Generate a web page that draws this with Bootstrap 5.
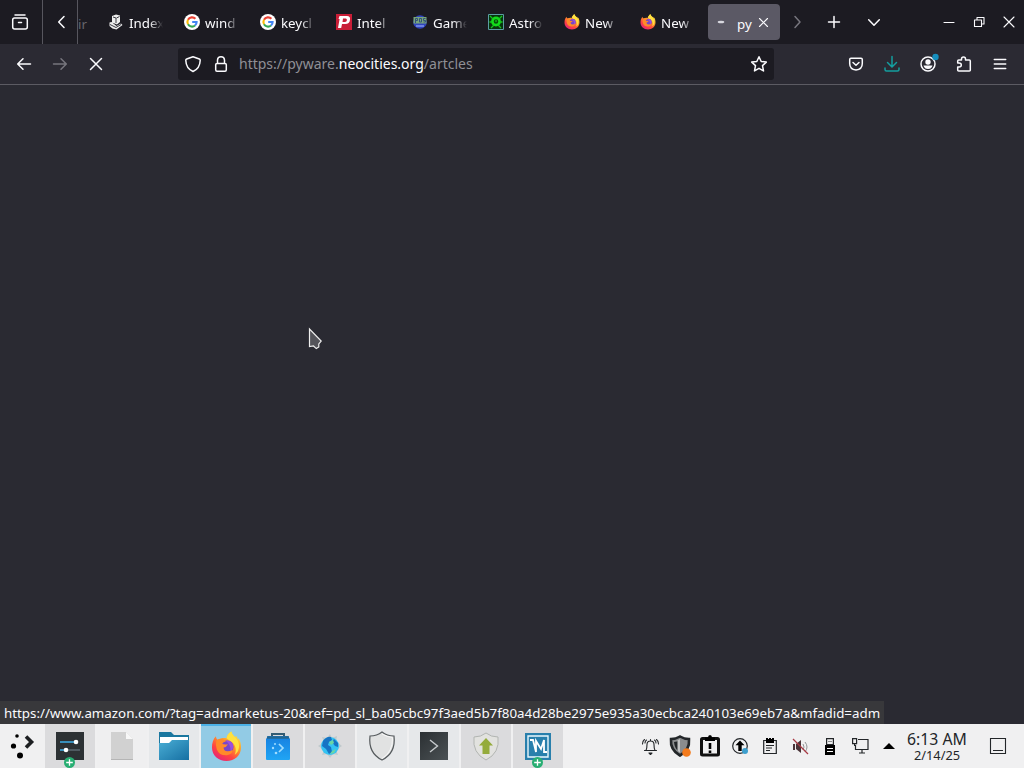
<!DOCTYPE html>
<html lang="en">
<head>
  <meta charset="UTF-8">
  <title>Desktop</title>
  <meta name="viewport" content="width=device-width, initial-scale=1">
  <link href="https://cdn.jsdelivr.net/npm/bootstrap@5.3.3/dist/css/bootstrap.min.css" rel="stylesheet">
  <style>
    body { font-family: "Noto Sans", sans-serif; font-size: 13.33px; line-height: 18px; background: #2a2a2e; color: #fbfbfe; cursor: default; }
    svg { display: block; flex: none; overflow: visible; }
    .ln { fill: none; stroke: currentColor; stroke-width: 1.5; stroke-linecap: round; stroke-linejoin: round; }
    .thin { stroke-width: 1.1; }
    .desktop { width: 1024px; height: 768px; }
    .tabstrip { height: 44px; background: #1c1b22; }
    .strip-btn { width: 43px; padding-left: 12px; border-right: 1px solid #57565e; }
    .strip-btn.scroll-left { width: 35px; padding-left: 15px; }
    .cut-tab { width: 23px; color: #66656c; }
    .browser-tab { width: 76px; padding: 0 0 0 7px; gap: 5px; }
    .tab-label { width: 34px; padding-top: 2px; white-space: nowrap; -webkit-mask-image: linear-gradient(to right, #000 60%, transparent 100%); mask-image: linear-gradient(to right, #000 60%, transparent 100%); }
    .current-tab { width: 72px; height: 36px; background: #5b5965; border-radius: 4px; margin-left: -1px; padding-left: 5px; }
    .navtools { height: 40px; background: #2b2a33; }
    .tool { width: 36px; }
    .urlbar { width: 596px; height: 32px; background: #1c1b22; border-radius: 3px; margin-left: 64px; padding: 0 7px; }
    .url { color: #8f8f95; font-size: 14px; line-height: 16px; padding-bottom: 1px; white-space: nowrap; }
    .url b { color: #fbfbfe; font-weight: 400; }
    .page { border-top: 1px solid #5c5b63; background: #2a2a32; min-height: 0; }
    .pointer { left: 308px; top: 243px; }
    .status { height: 23px; width: 884px; background: #38383b; padding: 3px 4px 0; white-space: nowrap; }
    .taskbar { height: 44px; background: #f0f0f1; color: #232629; }
    .launcher { width: 43px; margin-right: 2px; }
    .task { width: 50px; height: 44px; background: #dbdbdd; }
    .task-idle { background: #efeff0; }
    .task-soft { background: #e6e8ea; }
    .task-active { background: #92cbe5; border-top: 2px solid #4bb1e6; padding-bottom: 2px; }
    .plus { bottom: 0; left: 19px; }
    .tray { width: 30px; }
    .clock { width: 70px; }
    .time { font-size: 15.8px; line-height: 18px; white-space: nowrap; }
    .date { font-size: 12.8px; line-height: 14px; }
  </style>
</head>
<body>

<!-- shared icons -->
<svg width="0" height="0" class="position-absolute">
  <defs>
    <linearGradient id="flame" x1=".85" y1="0" x2=".2" y2="1"><stop offset="0" stop-color="#fff044"/><stop offset=".4" stop-color="#ff982b"/><stop offset=".7" stop-color="#ff4540"/><stop offset="1" stop-color="#e3207f"/></linearGradient>
    <linearGradient id="folder" x1="0" y1="0" x2="1" y2="1"><stop offset="0" stop-color="#4aaed5"/><stop offset="1" stop-color="#166fa2"/></linearGradient>
    <linearGradient id="bag" x1="0" y1="0" x2="0" y2="1"><stop offset="0" stop-color="#177fe0"/><stop offset="1" stop-color="#20a5f4"/></linearGradient>
    <linearGradient id="dark" x1="0" y1="0" x2="1" y2="1"><stop offset="0" stop-color="#2b3033"/><stop offset="1" stop-color="#4b5154"/></linearGradient>
    <symbol id="firefox" viewBox="0 0 32 32">
      <path fill="url(#flame)" d="M16 31C7.500 31 1 25 1 17c0-4.500 1.300-8.500 4-11.500.2 1.500.8 2.500 1.600 3.500 3-1.500 6-2 9.400-1.500C16.500 4 18.500 2 21 .5c.4 2.500 2 4 4 6l.8-1.500c1 1.200 1.700 2.500 2 4 .5-.6.600-1 .6-1.800 1.800 2.800 2.600 6.300 2.600 9.800C31 25 24.500 31 16 31z"/>
      <path fill="#ffe13f" d="M21 .5c.4 2.500 2 4 4 6 4 4 5 9 3 14-.8 2-2 3-3.500 4 2-4.500 1-9.500-2-12.500-2-2-4.500-2.500-6.500-4.500C16.500 4 18.500 2 21 .5z"/>
      <circle cx="16.500" cy="16.500" r="6.800" fill="#7846c8"/>
      <path fill="#9a4fe0" d="M15 10q6-1 8 5 0 4-3 6 1-7-5-11z"/>
      <path fill="#ff8a29" d="M5.500 9.500q6-2.500 10 1-3 .5-4 3 3 .8 6 .2-1.500 3-4.500 3.300 0 3.500 4 4 3.500 0 5.500-2-.5 5-6 6-8 .5-10.500-6-1.500-5-.5-9.500z"/>
    </symbol>
    <symbol id="google" viewBox="0 0 16 16">
      <circle cx="8" cy="8" r="8" fill="#fff"/>
      <g fill="none" stroke-width="2.100"><path stroke="#ea4335" d="M4 5.800A4.600 4.600 0 0 1 11.400 4.800"/><path stroke="#fbbc05" d="M4 5.800A4.700 4.700 0 0 0 4 10.300"/><path stroke="#34a853" d="M4 10.300A4.600 4.600 0 0 0 11 11.500"/><path stroke="#4285f4" d="M11 11.500A4.500 4.500 0 0 0 12.600 8H8.200"/></g>
    </symbol>
    <symbol id="plus" viewBox="0 0 10 10"><circle cx="5" cy="5" r="5" fill="#27ae72"/><path d="M5 2v6M2 5h6" stroke="#fff" stroke-width="1.200"/></symbol>
  </defs>
</svg>

<div class="desktop d-flex flex-column overflow-hidden">

  <!-- tabs -->
  <div class="tabstrip d-flex">
    <div class="strip-btn d-flex align-items-center"><svg width="16" height="16" class="ln"><path d="M3 1h10M2.500 4h11Q15.300 4 15.300 6v7q0 2-2 2H2.700q-2 0-2-2V6q0-2 1.800-2zM6.500 8.500h3"/></svg></div>
    <div class="strip-btn scroll-left d-flex align-items-center"><svg width="7" height="12" class="ln"><path d="M6 .5.700 6 6 11.500"/></svg></div>
    <div class="cut-tab d-flex align-items-center pt-1">ir</div>

    <div class="browser-tab d-flex align-items-center">
      <svg width="16" height="16"><path fill="#eee" d="M4 2 8 .500l4 1V8L9 10.500 4 8.500zM1.500 8.500l2-.5 5 4L13 9.500l1.500 1.500-6 4.500-4-1L1.500 12z"/><path fill="none" stroke="#3a3a42" d="m5 3 3 1v5M8.500 4l3-1.500M2 10.500l6 3 5-3"/></svg>
      <span class="tab-label">Index</span>
    </div>
    <div class="browser-tab d-flex align-items-center"><svg width="16" height="16"><use href="#google"/></svg><span class="tab-label">wind</span></div>
    <div class="browser-tab d-flex align-items-center"><svg width="16" height="16"><use href="#google"/></svg><span class="tab-label">keycl</span></div>
    <div class="browser-tab d-flex align-items-center">
      <svg width="16" height="16"><path fill="#c91e37" d="M0 0h16v16H0z"/><path fill="#fff" fill-rule="evenodd" d="M3.500 2H11q3.500 0 3 3.700-.5 4.300-4.700 4.300H6l-.8 4H2l1.600-9H2.500zM7 4.500 6.500 8H9q1.700 0 1.900-1.800.2-1.700-1.200-1.700z"/></svg>
      <span class="tab-label">Intel</span>
    </div>
    <div class="browser-tab d-flex align-items-center">
      <svg width="16" height="16"><circle cx="8" cy="8" r="6.800" fill="#3145bd"/><path fill="#77a57b" d="M1.500 3h13v6.500h-13z"/><path fill="none" stroke="#34527c" d="M3.500 9V4.500h2v2h-2M7.500 4.500h2V8h-2zM13.500 4.500h-2v2h2V8h-2"/><path stroke="#8197ed" stroke-width="1.500" d="M4 12h8"/></svg>
      <span class="tab-label">Game</span>
    </div>
    <div class="browser-tab d-flex align-items-center">
      <svg width="16" height="16"><path fill="#06350d" stroke="#5a9da2" d="M.5.500h15v15H.5z"/><circle cx="8" cy="7.500" r="3.600" fill="#064d09" stroke="#12dc1b" stroke-width="2.600"/><path stroke="#15c51d" stroke-width="1.300" d="m2 2 3 3m9-3-3 3M1.500 8H4m8 0h2.500M3 14l3-3m7 3-3-3"/><circle cx="8" cy="7" r="1" fill="#1ba322"/></svg>
      <span class="tab-label">Astro</span>
    </div>
    <div class="browser-tab d-flex align-items-center"><svg width="16" height="16"><use href="#firefox"/></svg><span class="tab-label">New</span></div>
    <div class="browser-tab d-flex align-items-center"><svg width="16" height="16"><use href="#firefox"/></svg><span class="tab-label">New</span></div>
    <div class="current-tab d-flex align-items-center align-self-center">
      <svg width="16" height="16"><ellipse cx="8" cy="8" rx="3.300" ry="1.300" fill="#d8d8df"/></svg>
      <span class="ps-2 pt-1" style="width: 30px">py</span>
      <svg width="9" height="9" class="ln thin"><path d="m.5.500 8 8m0-8-8 8"/></svg>
    </div>
    <div class="d-flex align-items-center flex-grow-1">
      <svg width="7" height="12" class="ln" style="color: #77767e; margin-left: 14px"><path d="m1 .5 5 5.500-5 5.500"/></svg>
      <svg width="12" height="12" class="ln" style="margin-left: 27px"><path d="M6 .5v11M.5 6h11"/></svg>
      <svg width="12" height="7" class="ln" style="margin-left: 28px"><path d="m.700.700 5.300 5.500L11.300.700"/></svg>
      <svg width="10" height="10" class="ln thin ms-auto"><path d="M0 5.500h10"/></svg>
      <svg width="10" height="10" class="ln thin" style="margin-left: 20px"><path d="M.5 3h7v6.500h-7zM3 3V.5h7v6.500H7.500"/></svg>
      <svg width="10" height="10" class="ln thin" style="margin: 0 10px 0 20px"><path d="m0 0 10 10M10 0 0 10"/></svg>
    </div>
  </div>

  <!-- navigation -->
  <div class="navtools d-flex align-items-center">
    <div class="tool d-flex justify-content-center" style="margin-left: 6px"><svg width="14" height="12" class="ln"><path d="M13.500 6H.8M6 .7.700 6 6 11.300"/></svg></div>
    <div class="tool d-flex justify-content-center" style="color: #77767e"><svg width="14" height="12" class="ln"><path d="M.5 6h12.700M8 .7 13.300 6 8 11.300"/></svg></div>
    <div class="tool d-flex justify-content-center"><svg width="12" height="12" class="ln"><path d="m.5.500 11 11m0-11-11 11"/></svg></div>
    <div class="urlbar d-flex align-items-center">
      <svg width="16" height="16" class="ln"><path d="M8 .7 14.300 3q1 .4.900 1.500-.3 8-7.200 11-6.900-3-7.200-11Q.7 3.400 1.700 3z"/></svg>
      <svg width="12" height="16" class="ln" style="margin: 0 12px 0 14px"><path d="M2.500 7.500V4Q2.700.8 6 .800T9.500 4v3.500M2 7.500h8q1.300 0 1.300 1.300v5q0 1.500-1.300 1.500H2Q.7 15.300.7 13.800v-5Q.7 7.500 2 7.500z"/></svg>
      <span class="url">https://pyware.<b>neocities.org</b>/artcles</span>
      <svg width="16" height="16" class="ln ms-auto"><path d="m8 .8 2.200 4.700 5.100.600-3.800 3.500 1 5.300L8 12.300l-4.500 2.600 1-5.300L.7 6.100l5.100-.6z"/></svg>
    </div>
    <div class="d-flex ms-auto align-items-center" style="margin-right: 6px">
      <div class="tool d-flex justify-content-center"><svg width="14" height="14" class="ln"><path d="M2 1.200h10q1.300 0 1.300 1.300v4q0 5.800-6.300 6.500Q.7 12.300.7 6.500v-4Q.7 1.200 2 1.200zM4 5.500l3 2.800 3-2.800"/></svg></div>
      <div class="tool d-flex justify-content-center" style="color: #149e9f"><svg width="16" height="16" class="ln"><path d="M8 .5v10M3.500 6.500 8 11l4.500-4.500M1 12v1.500q0 1.500 1.500 1.500h11q1.500 0 1.500-1.500V12"/></svg></div>
      <div class="tool d-flex justify-content-center"><svg width="16" height="16"><circle cx="8" cy="8" r="7" class="ln"/><circle cx="8" cy="6" r="2.700" fill="#fbfbfe"/><path fill="#fbfbfe" d="M3.500 9.500h9Q11.500 13 8 13t-4.500-3.500z"/><circle cx="15.500" cy="1" r="3.200" fill="#168ebd"/></svg></div>
      <div class="tool d-flex justify-content-center"><svg width="14" height="16" class="ln"><path d="M4.500 4V3q0-2 2-2t2 2v1h3.800q1 0 1 1v9.300q0 .7-1 .7H1.700q-1 0-1-.7V11H2q2.300 0 2.300-2T2 7H.7V5q0-1 1-1z"/></svg></div>
      <div class="tool d-flex justify-content-center"><svg width="12" height="16" class="ln"><path d="M.3 3.500h11.400M.3 8h11.400M.3 12.500h11.400"/></svg></div>
    </div>
  </div>

  <!-- page still loading -->
  <div class="page position-relative flex-grow-1 d-flex align-items-end">
    <svg class="pointer position-absolute" width="15" height="22"><path d="M1.500 1v17.500l4-.5 2.800 2.600 2.500-1.600v-3l2.400-3z" fill="#54545a" stroke="#eee" stroke-width="1.200"/></svg>
    <div class="status">https://www.amazon.com/?tag=admarketus-20&amp;ref=pd_sl_ba05cbc97f3aed5b7f80a4d28be2975e935a30ecbca240103e69eb7a&amp;mfadid=adm</div>
  </div>

  <!-- taskbar -->
  <div class="taskbar d-flex align-items-center">
    <div class="launcher d-flex justify-content-center"><svg width="24" height="26"><circle cx="7" cy="3" r="1.800"/><circle cx="3.500" cy="13" r="2.600"/><circle cx="10" cy="22.500" r="3"/><path d="m16 3.500 5.500 5.500-5.500 5.500" fill="none" stroke="#1d1f21" stroke-width="3.600"/></svg></div>
    <div class="d-flex" style="gap: 2px">
      <div class="task d-flex align-items-center justify-content-center position-relative">
        <svg width="28" height="28"><path fill="#2c3134" d="M0 0h28v28H0z"/><path stroke="#3daee9" stroke-width="1.500" d="M4 10h16M4 18h6"/><path stroke="#63717a" stroke-width="1.300" d="M10 18h14"/><circle cx="20" cy="10" r="2.300" fill="#fff"/><circle cx="10" cy="18" r="2.300" fill="#fff"/></svg>
        <svg class="plus position-absolute" width="11" height="11"><use href="#plus"/></svg>
      </div>
      <div class="task task-idle d-flex align-items-center justify-content-center"><svg width="22" height="28"><path fill="#d1d1d1" d="M0 0h15l7 7v21H0z"/><path fill="#f8f8f8" d="M15 0v7h7z"/><path stroke="#b5b5b5" d="M0 27.500h22"/></svg></div>
      <div class="task task-soft d-flex align-items-center justify-content-center"><svg width="30" height="28"><path fill="#1a779f" d="M0 0h12l3 3h15v20H0z"/><path fill="#fff" d="M1 5h28v8H1z"/><path fill="url(#folder)" d="M0 11h10l3-3h17v20H0z"/></svg></div>
      <div class="task task-active d-flex align-items-center justify-content-center"><svg width="31" height="31"><use href="#firefox"/></svg></div>
      <div class="task d-flex align-items-center justify-content-center"><svg width="24" height="27"><path fill="none" stroke="#335c74" stroke-width="2" d="M6 4V1h12v3"/><path fill="url(#bag)" d="M2 3h20l2 3v20q0 1-1 1H1q-1 0-1-1V6z"/><path stroke="#24668f" stroke-width="2.500" d="M1 4.500h22"/><path fill="none" stroke="#9fdcff" stroke-width="1.700" d="m13 11 4 4-4 4"/><g fill="#9fdcff"><circle cx="9" cy="11" r="1"/><circle cx="7" cy="15" r="1.200"/><circle cx="10" cy="20" r="1.300"/></g></svg></div>
      <div class="task d-flex align-items-center justify-content-center"><svg width="24" height="24"><path fill="#c0c9cc" d="m12 0 2 4 5-2-1 5 6 5-6 4 2 5-5-1-3 4-3-4-5 1 2-5-6-4 6-4-2-5 5 1z"/><circle cx="12" cy="12" r="9" fill="#35c3f2"/><path fill="#1774c4" d="M5 7q4-5 8-4l1 3-3 2-1 3 3 2 1 5-3 2-3-5-4-3zM16 5l4 4v4l-3-1-3-4z"/><path fill="#6bd6a4" d="m11 8 4-2 1 3-3 2zm3 9 4-2-2 4-4 1z"/></svg></div>
      <div class="task task-soft d-flex align-items-center justify-content-center"><svg width="28" height="30"><path fill="#e1e2e2" stroke="#555a5d" stroke-width="1.200" d="M14 1q5 4 12 4 2 17-12 24Q0 22 2 5q7 0 12-4z"/><path fill="none" stroke="#f8f8f8" d="M14 3q5 3 10.500 3.500Q25 21 14 27.500"/></svg></div>
      <div class="task task-soft d-flex align-items-center justify-content-center"><svg width="28" height="28"><path fill="url(#dark)" d="M0 0h28v28H0z"/><path fill="none" stroke="#c7cbcd" stroke-width="1.400" d="m10 8 7.500 6-7.500 6"/></svg></div>
      <div class="task d-flex align-items-center justify-content-center"><svg width="28" height="30"><path fill="#e2e2df" stroke="#b2b5b2" d="M14 2q5 4 12 4 2 16-12 23Q0 22 2 6q7 0 12-4z"/><path fill="#94ab3b" d="m14 7 7 7.500h-3.500V23h-7v-8.500H7z"/></svg></div>
      <div class="task d-flex align-items-center justify-content-center position-relative">
        <svg width="26" height="27"><path fill="#287fac" d="M0 0h26v27H0z"/><path fill="none" stroke="#e9f7fd" stroke-width="1.400" d="M3 3h20v21H3z"/><path fill="none" stroke="#fff" stroke-width="1.800" d="M5 7h3l3 12V8l5 8 3-9v12h3"/></svg>
        <svg class="plus position-absolute" width="11" height="11"><use href="#plus"/></svg>
      </div>
    </div>

    <div class="d-flex align-items-center ms-auto">
      <div class="tray d-flex justify-content-center"><svg width="17" height="17" class="ln thin"><path d="M2.500 12.500h12M4 12.500q1-2 1-6Q5 3 8.500 3T12 6.500q0 4 1 6M8.500 3V1.500M3 5q0-2 1.500-3M14 5q0-2-1.500-3M.5 6q0-3 2-4.500M16.500 6q0-3-2-4.500"/><path fill="#232629" d="M7 15h3l-1.500 1.500z"/></svg></div>
      <div class="tray d-flex justify-content-center"><svg width="22" height="22"><path fill="#8a8c8e" stroke="#232629" stroke-width="2.600" d="M11 1.500q4 2.500 9 2.500 1 11-9 16.500Q1 15 2 4q5 0 9-2.500z"/><path fill="#232629" d="M11 5v13q-5.500-4-6-11Q8 7 11 5z"/><path fill="#c4c5c6" d="M11 4v14q-1.500-1-2.500-2.500V5.500z"/><circle cx="17.500" cy="17.500" r="4.300" fill="#f37b1d"/></svg></div>
      <div class="tray d-flex justify-content-center"><svg width="20" height="22"><rect x="1.500" y="3.500" width="17" height="16.500" rx="1" fill="none" stroke="#111" stroke-width="3"/><path d="M5 2.500h3Q8 0 10 0t2 2.500h3V6H5zM8.700 8h2.600v6H8.700zm0 7.500h2.600V18H8.700z"/></svg></div>
      <div class="tray d-flex justify-content-center"><svg width="16" height="16"><circle cx="8" cy="8" r="7.300" fill="none" stroke="#232629" stroke-width="1.200"/><path d="m8 2.500 4.500 4.700H9.700V13H6.300V7.200H3.500z"/><circle cx="13" cy="13" r="3" fill="#3d9fce"/></svg></div>
      <div class="tray d-flex justify-content-center"><svg width="14" height="16"><path fill="none" stroke="#232629" stroke-width="1.200" d="M.7 2.500h12.600v13H.7zM3 7.500h8M3 10h6M3 12.500h4"/><path d="M3 0h2v1h1V0h2v1h1V0h2v5H3z"/></svg></div>
      <div class="tray d-flex justify-content-center"><svg width="17" height="17"><path fill="#4a3438" d="M1 6h2v6H1zM4 6l5-4v13l-5-4z"/><path fill="none" stroke="#929496" d="M11 6q2 3 0 6M13 4q4 5 0 10"/><path stroke="#a93943" stroke-width="1.200" d="m1 1 15 15"/></svg></div>
      <div class="tray d-flex justify-content-center"><svg width="10" height="17"><path fill="none" stroke="#232629" stroke-width="1.200" d="M1.600.6h6.800v6H1.600zM3.500 3.500h1m1 0h1"/><path d="M0 7h10v10H0z"/><path stroke="#fff" d="M2 10.500h6M2 13.500h6"/></svg></div>
      <div class="tray d-flex justify-content-center"><svg width="17" height="16"><path fill="none" stroke="#232629" stroke-width="1.200" d="M6 1.500h10v10H3.500V7M.6.600h4v5h-4zM2.600 5.500V8M7 15h6M10 11.500V15"/></svg></div>
      <div class="tray d-flex justify-content-center" style="width: 27px"><svg width="12" height="6"><path d="M0 6 6 0l6 6z"/></svg></div>
      <div class="clock text-center">
        <div class="time">6:13 AM</div>
        <div class="date">2/14/25</div>
      </div>
      <div class="d-flex justify-content-center" style="width: 52px"><svg width="16" height="16"><path fill="none" stroke="#232629" stroke-width="1.100" d="M.5.500h15v15H.5zM3 12.500h10"/></svg></div>
    </div>
  </div>
</div>

<script src="https://cdn.jsdelivr.net/npm/bootstrap@5.3.3/dist/js/bootstrap.bundle.min.js"></script>
</body>
</html>
